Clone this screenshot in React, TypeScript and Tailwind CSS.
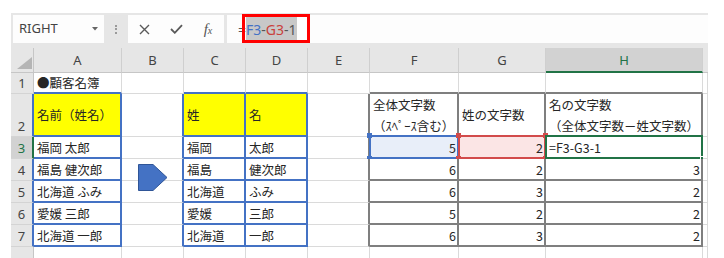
import type { ReactNode } from "react"

type Tone = "blue" | "dark" | "grid"

const COLS = ["A", "B", "C", "D", "E", "F", "G", "H", "I"]
const CJK = "[font-family:'Noto_Sans_CJK_JP','Noto_Sans',sans-serif]"
const UI = "[font-family:'Noto_Sans','Liberation_Sans',sans-serif]"

const RIGHT: Record<Tone, string> = {
  grid: "border-r border-r-[#dadada]",
  blue: "border-r-2 border-r-[#4472c4]",
  dark: "border-r-2 border-r-[#7f7f7f]",
}

const BOTTOM: Record<Tone, string> = {
  grid: "border-b border-b-[#dadada]",
  blue: "border-b-2 border-b-[#4472c4]",
  dark: "border-b-2 border-b-[#7f7f7f]",
}

const toneOf = (r: number, c: number): Tone | null => {
  if (r < 2 || r > 7) return null
  if (c === 0 || c === 2 || c === 3) return "blue"
  if (c >= 5 && c <= 7) return "dark"
  return null
}

type CellData = { lines: string[]; align?: "right"; bg?: string }

const yellow = "bg-[#ffff00]"

const DATA: Record<string, CellData> = {
  A1: { lines: ["●顧客名簿"] },
  A2: { lines: ["名前（姓名）"], bg: yellow },
  C2: { lines: ["姓"], bg: yellow },
  D2: { lines: ["名"], bg: yellow },
  F2: { lines: ["全体文字数", "（ｽﾍﾟｰｽ含む）"] },
  G2: { lines: ["姓の文字数"] },
  H2: { lines: ["名の文字数", "（全体文字数－姓文字数）"] },
}

const people = [
  ["福岡 太郎", "福岡", "太郎", "5", "2", "=F3-G3-1"],
  ["福島 健次郎", "福島", "健次郎", "6", "2", "3"],
  ["北海道 ふみ", "北海道", "ふみ", "6", "3", "2"],
  ["愛媛 三郎", "愛媛", "三郎", "5", "2", "2"],
  ["北海道 一郎", "北海道", "一郎", "6", "3", "2"],
]

people.forEach((p, i) => {
  const r = i + 3
  DATA["A" + r] = { lines: [p[0]] }
  DATA["C" + r] = { lines: [p[1]] }
  DATA["D" + r] = { lines: [p[2]] }
  DATA["F" + r] = { lines: [p[3]], align: "right", bg: r === 3 ? "bg-[#e8eef9]" : undefined }
  DATA["G" + r] = { lines: [p[4]], align: "right", bg: r === 3 ? "bg-[#fbe5e5]" : undefined }
  DATA["H" + r] = { lines: [p[5]], align: r === 3 ? undefined : "right" }
})

const Handle = ({ pos, color }: { pos: string; color: string }) => (
  <span className={`absolute w-[5px] h-[5px] ${pos} ${color}`} />
)

const RefBox = ({ border, fill }: { border: string; fill: string }) => (
  <div className={`absolute left-[-1px] top-[-2px] right-[-2px] bottom-[-2px] border-2 ${border}`}>
    <Handle pos="-left-[4px] -top-[4px]" color={fill} />
    <Handle pos="-right-[4px] -top-[4px]" color={fill} />
    <Handle pos="-left-[4px] -bottom-[4px]" color={fill} />
    <Handle pos="-right-[4px] -bottom-[4px]" color={fill} />
  </div>
)

function Cell({ r, c }: { r: number; c: number }) {
  const key = COLS[c] + r
  const d = DATA[key]
  const right = RIGHT[toneOf(r, c) ?? toneOf(r, c + 1) ?? "grid"]
  const bottom = BOTTOM[toneOf(r, c) ?? toneOf(r + 1, c) ?? "grid"]
  return (
    <div
      className={`relative flex flex-col justify-center overflow-visible ${right} ${bottom} ${d?.bg ?? "bg-white"} ${
        d?.align === "right" ? "items-end pr-[1px]" : "items-start pl-[3px]"
      } ${CJK} text-[12.5px] leading-[21px] text-[#262626] whitespace-nowrap`}
    >
      {d?.lines.map((l) => <span key={l}>{l}</span>)}
      {key === "F3" && <RefBox border="border-[#4472c4]" fill="bg-[#4472c4]" />}
      {key === "G3" && <RefBox border="border-[#d24b4b]" fill="bg-[#d24b4b]" />}
      {key === "H3" && (
        <div className="absolute left-[-1px] top-[-2px] right-[-2px] bottom-[-2px] border-2 border-[#217346]">
          <span className="absolute -right-[5px] -bottom-[5px] w-[6px] h-[6px] bg-[#217346] border border-white" />
        </div>
      )}
    </div>
  )
}

function RowHeader({ r }: { r: number }) {
  const selected = r === 3
  const right = selected
    ? "border-r-2 border-r-[#217346]"
    : toneOf(r, 0)
      ? "border-r-2 border-r-[#4472c4]"
      : "border-r border-r-[#c6c6c6]"
  return (
    <div
      className={`flex items-end justify-center pb-[1px] border-b border-b-[#d4d4d4] ${right} ${
        selected ? "bg-[#d2d2d2] text-[#217346]" : "bg-[#e6e6e6] text-[#444]"
      } ${UI} text-[13px] leading-[18px]`}
    >
      {r < 8 ? r : ""}
    </div>
  )
}

function Sheet() {
  const cells: ReactNode[] = []
  cells.push(
    <div key="corner" className="relative bg-[#e6e6e6] border-r border-r-[#c6c6c6] border-b border-b-[#c6c6c6]">
      <svg className="absolute left-0 top-0" width="23" height="25" viewBox="0 0 23 25">
        <polygon points="21,9 21,21 6,21" fill="#b5b5b5" />
      </svg>
    </div>
  )
  COLS.forEach((col) => {
    const sel = col === "H"
    cells.push(
      <div
        key={col}
        className={`flex items-center justify-center pt-[2px] ${UI} text-[13px] ${
          sel
            ? "bg-[#d2d2d2] text-[#217346] border-b-2 border-b-[#217346]"
            : "bg-[#e6e6e6] text-[#444] border-b border-b-[#c6c6c6]"
        } ${col === "I" ? "" : "border-r border-r-[#cfcfcf]"}`}
      >
        {col === "I" ? "" : col}
      </div>
    )
  })
  for (let r = 1; r <= 8; r++) {
    cells.push(<RowHeader key={"r" + r} r={r} />)
    COLS.forEach((_, c) => cells.push(<Cell key={COLS[c] + r} r={r} c={c} />))
  }
  return (
    <div className="grid grid-cols-[23px_88px_62px_62px_62px_62px_89px_87px_157px_5px] grid-rows-[25px_21px_43px_22px_22px_22px_22px_22px_22px]">
      {cells}
    </div>
  )
}

function FormulaBar() {
  return (
    <div className="h-[35px] bg-[#e6e6e6] flex items-start pt-[2px] pl-[2px]">
      <div className={`w-[91px] h-[28px] bg-[#fdfdfd] flex items-center justify-between pl-[6px] pr-[6px] ${UI} text-[13px] text-[#444]`}>
        <span>RIGHT</span>
        <svg width="6" height="4" viewBox="0 0 6 4">
          <polygon points="0,0 6,0 3,3.5" fill="#666" />
        </svg>
      </div>
      <div className="w-[24px] h-[28px] flex flex-col items-center justify-center gap-[1.5px]">
        <span className="w-[2px] h-[2px] bg-[#9a9a9a]" />
        <span className="w-[2px] h-[2px] bg-[#9a9a9a]" />
        <span className="w-[2px] h-[2px] bg-[#9a9a9a]" />
      </div>
      <div className="w-[96px] h-[28px] bg-[#fdfdfd] flex items-center">
        <div className="w-[32px] flex justify-center">
          <svg width="11" height="11" viewBox="0 0 11 11">
            <path d="M1 1 L10 10 M10 1 L1 10" stroke="#5a5a5a" strokeWidth="1.4" />
          </svg>
        </div>
        <div className="w-[32px] flex justify-center">
          <svg width="13" height="10" viewBox="0 0 13 10">
            <path d="M1 5 L4.8 8.8 L12 1.2" stroke="#5a5a5a" strokeWidth="1.8" fill="none" />
          </svg>
        </div>
        <div className="w-[32px] flex justify-center items-baseline [font-family:'Liberation_Serif',serif] italic text-[#555]">
          <span className="text-[15px]">f</span>
          <span className="text-[10px]">x</span>
        </div>
      </div>
      <div className={`flex-1 ml-[3px] h-[28px] bg-[#fdfdfd] flex items-center pl-[11px] ${UI} text-[14px] text-[#555]`}>
        <span>=</span>
        <span className="bg-[#c8c8c8] leading-[25px]">
          <span className="text-[#4472c4]">F3</span>-<span className="text-[#c9403c]">G3</span>-1
        </span>
      </div>
    </div>
  )
}

export default function App() {
  return (
    <div className="relative w-[724px] h-[258px] overflow-hidden bg-white pt-[13px] pl-[11px]">
      <div className="w-[697px]">
        <FormulaBar />
        <Sheet />
      </div>
      <div className="absolute left-[242px] top-[14px] w-[68px] h-[29px] border-[3px] border-[#ff0000]" />
      <svg className="absolute left-[138px] top-[164px]" width="30" height="27" viewBox="0 0 30 27">
        <polygon points="0.5,0.5 15,0.5 29,13.5 15,26.5 0.5,26.5" fill="#4472c4" stroke="#2f5597" strokeWidth="1" />
      </svg>
    </div>
  )
}
